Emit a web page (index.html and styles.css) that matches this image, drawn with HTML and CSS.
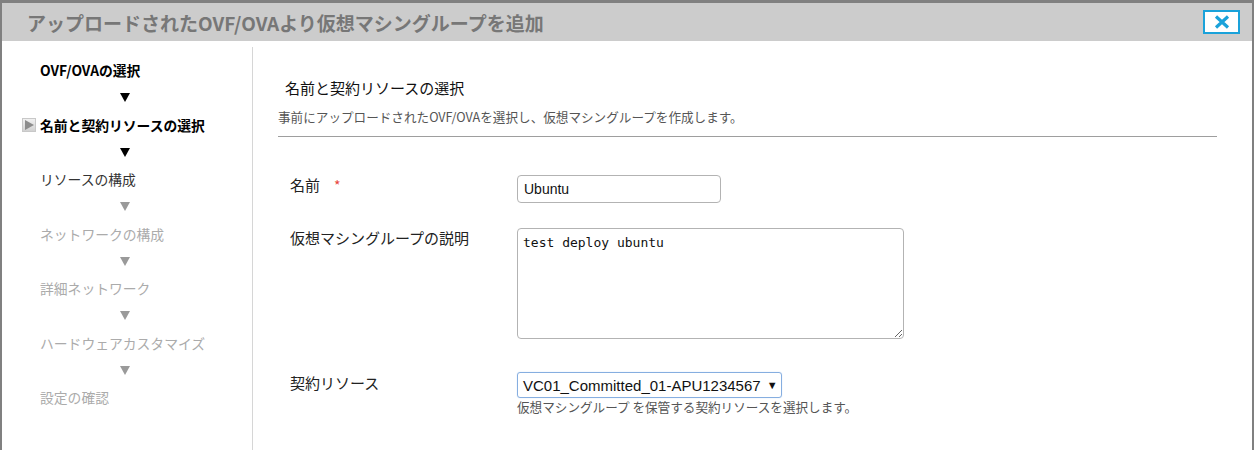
FILE: index.html
```html
<!DOCTYPE html>
<html lang="ja">
<head>
<meta charset="utf-8">
<title>仮想マシングループを追加</title>
<link rel="stylesheet" href="styles.css">
</head>
<body>
<div class="dialog">
  <div class="header">
    <div class="title">アップロードされたOVF/OVAより仮想マシングループを追加</div>
    <button class="close" type="button" aria-label="閉じる">
      <svg width="16" height="14" viewBox="0 0 16 14"><path d="M2 1.5 L14 12.5 M14 1.5 L2 12.5" stroke="#1aa2da" stroke-width="3.2" stroke-linecap="butt" fill="none"/></svg>
    </button>
  </div>
  <div class="body">
    <div class="sidebar">
      <div class="step done">OVF/OVAの選択</div>
      <div class="arrow dark"></div>
      <div class="step done current"><span class="marker"><svg width="14" height="14" viewBox="0 0 14 14"><defs><linearGradient id="g" x1="0" y1="0" x2="0" y2="1"><stop offset="0" stop-color="#f2f2f2"/><stop offset="1" stop-color="#d0d0d0"/></linearGradient></defs><rect x="0.5" y="0.5" width="13" height="13" fill="url(#g)" stroke="#c8c8c8"/><path d="M3 2 L12 7 L3 12 Z" fill="#8c8c8c"/></svg></span>名前と契約リソースの選択</div>
      <div class="arrow dark"></div>
      <div class="step next">リソースの構成</div>
      <div class="arrow"></div>
      <div class="step todo">ネットワークの構成</div>
      <div class="arrow"></div>
      <div class="step todo">詳細ネットワーク</div>
      <div class="arrow"></div>
      <div class="step todo">ハードウェアカスタマイズ</div>
      <div class="arrow"></div>
      <div class="step todo">設定の確認</div>
    </div>
    <div class="main">
      <div class="section-title">名前と契約リソースの選択</div>
      <div class="section-desc">事前にアップロードされたOVF/OVAを選択し、仮想マシングループを作成します。</div>
      <div class="rule"></div>
      <div class="row row-name">
        <div class="label">名前<span class="req">*</span></div>
        <input class="text-input" type="text" value="Ubuntu">
      </div>
      <div class="row row-desc">
        <div class="label">仮想マシングループの説明</div>
        <textarea class="textarea">test deploy ubuntu</textarea>
      </div>
      <div class="row row-res">
        <div class="label">契約リソース</div>
        <div class="field">
          <div class="select"><span>VC01_Committed_01-APU1234567</span><span class="caret">▼</span></div>
          <div class="help">仮想マシングループ を保管する契約リソースを選択します。</div>
        </div>
      </div>
    </div>
  </div>
</div>
</body>
</html>
```

FILE: styles.css
```css
* { box-sizing: border-box; }
html, body { margin: 0; padding: 0; }
body {
  background: #808080;
  width: 1254px;
  height: 450px;
  overflow: hidden;
  font-family: "Noto Sans CJK JP", "Liberation Sans", sans-serif;
}
.dialog {
  margin: 3px 2px 0 2px;
  height: 447px;
  background: #fff;
  display: flex;
  flex-direction: column;
}
.header {
  height: 38px;
  background: #cccccc;
  display: flex;
  align-items: center;
  justify-content: space-between;
  padding: 0 12px 0 25px;
}
.title {
  font-size: 19px;
  font-weight: bold;
  color: #777777;
  line-height: 24px;
  margin-top: 1px;
}
.close {
  width: 37px;
  height: 24px;
  border: 2px solid #1aa2da;
  background: #fff;
  padding: 0;
  margin: 0;
  display: flex;
  align-items: center;
  justify-content: center;
}
.body {
  flex: 1;
  display: flex;
}
.sidebar {
  width: 251px;
  margin-top: 6px;
  border-right: 1px solid #d6d6d6;
  padding-top: 9px;
  display: flex;
  flex-direction: column;
}
.step {
  height: 28px;
  line-height: 28px;
  padding-left: 38px;
  font-size: 13.8px;
  position: relative;
  white-space: nowrap;
}
.step.done { color: #000; font-weight: bold; }
.step.next { color: #333; }
.step.todo { color: #ababab; }
.marker {
  position: absolute;
  left: 20px;
  top: 7px;
  width: 14px;
  height: 14px;
  display: block;
}
.marker svg { display: block; }
.arrow {
  height: 26.5px;
  display: flex;
  align-items: center;
  justify-content: center;
  width: 246px;
}
.arrow::before {
  content: "";
  display: block;
  border-left: 5px solid transparent;
  border-right: 5px solid transparent;
  border-top: 9px solid #9a9a9a;
  margin-top: 1px;
}
.arrow.dark::before { border-top-color: #000; }
.main {
  flex: 1;
  padding: 36px 35px 0 25px;
}
.section-title {
  font-size: 15px;
  line-height: 22px;
  color: #111;
  padding-left: 7px;
}
.section-desc {
  font-size: 12.6px;
  line-height: 18px;
  color: #555;
  margin-top: 9px;
}
.rule {
  height: 1px;
  background: #9e9e9e;
  margin-top: 10px;
}
.row {
  display: flex;
  align-items: flex-start;
  padding-left: 12px;
}
.label {
  width: 227px;
  flex: none;
  font-size: 15px;
  line-height: 20px;
  color: #222;
}
.req {
  color: #e8453c;
  margin-left: 14px;
  font-size: 14px;
}
.row-name { margin-top: 38px; }
.row-desc { margin-top: 25px; }
.row-res { margin-top: 33px; }
.row-res .label { margin-top: 1px; }
.text-input {
  width: 204px;
  height: 28px;
  border: 1px solid #b3b3b3;
  border-radius: 4px;
  padding: 0 6px;
  font-family: "Liberation Sans", "Noto Sans CJK JP", sans-serif;
  font-size: 14px;
  color: #111;
  margin: 0;
  outline: none;
}
.textarea {
  width: 387px;
  height: 111px;
  border: 1px solid #b3b3b3;
  border-radius: 4px;
  padding: 5px 5px;
  font-family: "DejaVu Sans Mono", "Liberation Mono", monospace;
  font-size: 13px;
  line-height: 18px;
  color: #111;
  margin: 0;
  resize: both;
  outline: none;
}
.field { display: flex; flex-direction: column; }
.select {
  width: 265px;
  height: 26px;
  border: 1px solid #86aee0;
  border-radius: 3px;
  box-shadow: 0 0 1px #a9c8ee;
  padding: 0 0 0 5px;
  display: flex;
  align-items: center;
  font-family: "Liberation Sans", sans-serif;
  font-size: 15px;
  color: #111;
  white-space: nowrap;
}
.caret {
  font-size: 11px;
  margin-left: 6px;
  color: #111;
}
.help {
  font-size: 12.6px;
  line-height: 16px;
  color: #555;
  margin-top: 1px;
}
```
